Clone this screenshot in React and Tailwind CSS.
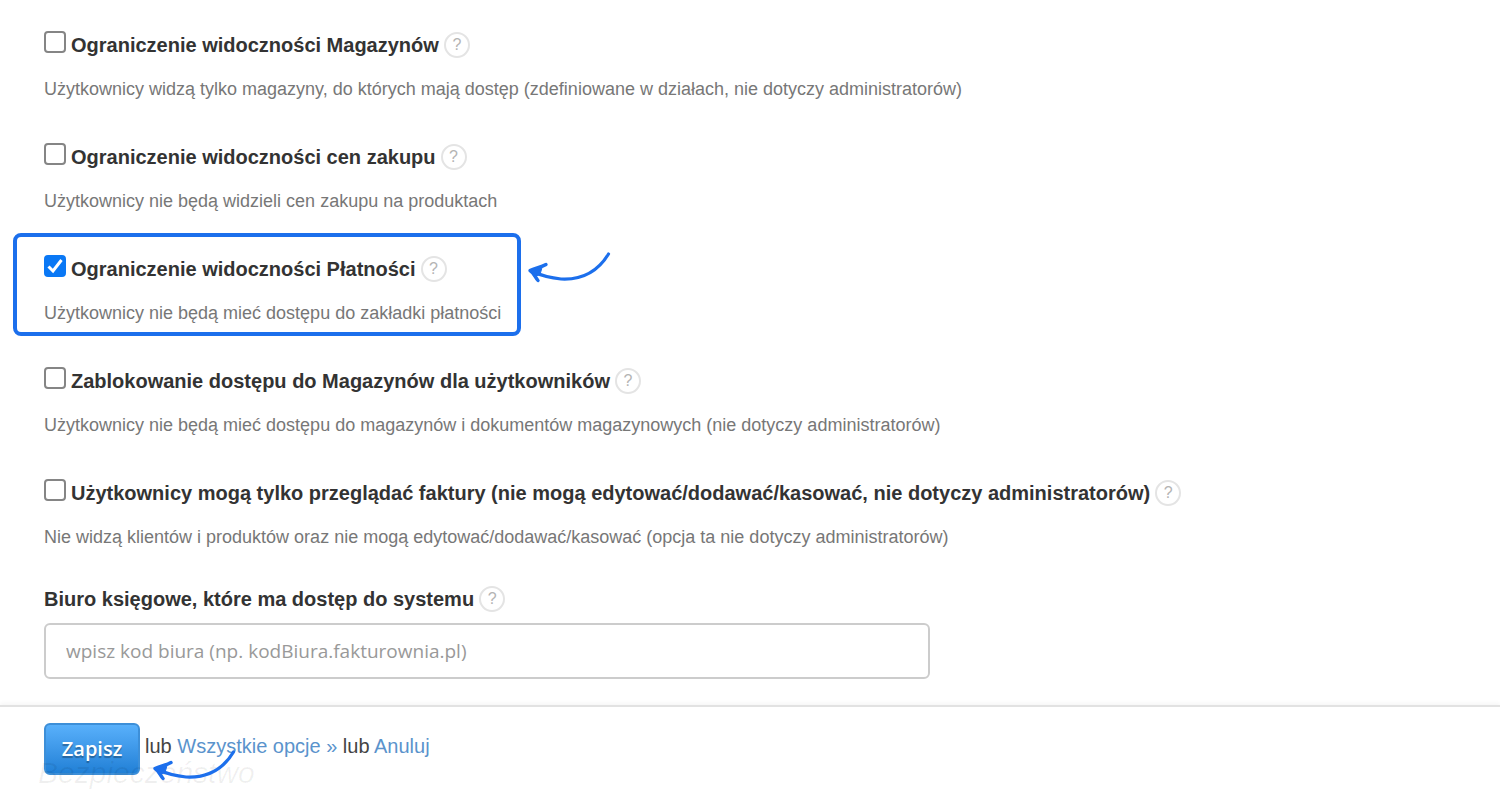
import React, { useState } from 'react';

const OPTIONS = [
  {
    id: 'warehouses',
    label: 'Ograniczenie widoczności Magazynów',
    description: 'Użytkownicy widzą tylko magazyny, do których mają dostęp (zdefiniowane w działach, nie dotyczy administratorów)',
  },
  {
    id: 'purchase-prices',
    label: 'Ograniczenie widoczności cen zakupu',
    description: 'Użytkownicy nie będą widzieli cen zakupu na produktach',
  },
  {
    id: 'payments',
    label: 'Ograniczenie widoczności Płatności',
    description: 'Użytkownicy nie będą mieć dostępu do zakładki płatności',
    highlighted: true,
  },
  {
    id: 'block-warehouses',
    label: 'Zablokowanie dostępu do Magazynów dla użytkowników',
    description: 'Użytkownicy nie będą mieć dostępu do magazynów i dokumentów magazynowych (nie dotyczy administratorów)',
  },
  {
    id: 'read-only',
    label: 'Użytkownicy mogą tylko przeglądać faktury (nie mogą edytować/dodawać/kasować, nie dotyczy administratorów)',
    description: 'Nie widzą klientów i produktów oraz nie mogą edytować/dodawać/kasować (opcja ta nie dotyczy administratorów)',
  },
];

function HelpButton() {
  return (
    <button
      type="button"
      aria-label="Pomoc"
      className="ml-[5px] flex h-[26px] w-[26px] shrink-0 items-center justify-center rounded-full border-2 border-[#e4e4e4] bg-white text-base text-[#b4b4b4]"
    >
      ?
    </button>
  );
}

function Arrow({ className }) {
  return (
    <svg viewBox="0 0 84 32" fill="none" stroke="#1c6fec" strokeLinecap="round" strokeLinejoin="round" className={className}>
      <path d="M81.500 3C70 22 53 29 34 28C23 27 13 24 4 20" strokeWidth="3.200" />
      <path d="M19 13.500C14 16.500 8 17 3 19.500C7 22 8 26 11 29.500" strokeWidth="3.400" />
      <path d="M3 20L15 16.500L13 23.500L9 25Z" fill="#1c6fec" strokeWidth="1" />
    </svg>
  );
}

function Option({ option, checked, onChange }) {
  return (
    <div className="relative w-fit">
      <div className="flex h-7 items-center">
        <span className="relative h-[22px] w-[22px] shrink-0 self-start">
          <input
            id={option.id}
            type="checkbox"
            checked={checked}
            onChange={onChange}
            className="block h-[22px] w-[22px] appearance-none rounded-[4px] border-2 border-[#858585] bg-white checked:border-[#0a78f5] checked:bg-[#0a78f5]"
          />
          {checked && (
            <svg viewBox="0 0 22 22" fill="none" stroke="white" strokeWidth="3" className="pointer-events-none absolute inset-0">
              <path d="M4.500 11.500L9 16L17.500 5" />
            </svg>
          )}
        </span>
        <label htmlFor={option.id} className="pl-[5px] text-xl font-bold whitespace-nowrap text-[#333]">
          {option.label}
        </label>
        <HelpButton />
      </div>
      <p className="mt-[18px] text-lg leading-6 whitespace-nowrap text-[#777]">{option.description}</p>

      {option.highlighted && (
        <>
          <div className="pointer-events-none absolute -top-[22px] -right-5 -bottom-[11px] -left-[31px] rounded-lg border-4 border-[#1c6fec]" />
          <Arrow className="pointer-events-none absolute -top-1 left-full ml-[26px] h-8 w-[84px]" />
        </>
      )}
    </div>
  );
}

export default function App() {
  const [checked, setChecked] = useState({ payments: true });
  const [officeCode, setOfficeCode] = useState('');

  const toggle = (id) => setChecked((prev) => ({ ...prev, [id]: !prev[id] }));

  return (
    <form
      onSubmit={(e) => e.preventDefault()}
      className="min-h-screen overflow-hidden bg-white font-['Liberation_Sans',Arial,sans-serif]"
    >
      <div className="px-11 pt-[31px] pb-[26px]">
        <div className="flex flex-col gap-[42px]">
          {OPTIONS.map((option) => (
            <Option
              key={option.id}
              option={option}
              checked={!!checked[option.id]}
              onChange={() => toggle(option.id)}
            />
          ))}
        </div>

        {/* Accounting office */}
        <div className="mt-9 flex h-7 items-center">
          <label htmlFor="office-code" className="text-xl font-bold text-[#333]">
            Biuro księgowe, które ma dostęp do systemu
          </label>
          <HelpButton />
        </div>
        <input
          id="office-code"
          type="text"
          value={officeCode}
          onChange={(e) => setOfficeCode(e.target.value)}
          placeholder="wpisz kod biura (np. kodBiura.fakturownia.pl)"
          className="mt-[10px] block h-14 w-full max-w-[886px] rounded-md border-2 border-[#ccc] bg-white px-5 font-['Open_Sans',sans-serif] text-[19px] text-[#555] placeholder:text-[#999]"
        />
      </div>

      <div className="relative flex items-start border-t-2 border-[#e2e2e2] px-11 pt-4 pb-4 text-xl shadow-[0_-2px_4px_rgba(0,0,0,0.04)]">
        <button
          type="submit"
          className="h-[52px] w-24 rounded-md border-2 border-[#3d8fd8] bg-linear-to-b from-[#58b0fb] to-[#2080d6] font-['Open_Sans',sans-serif] text-xl font-semibold text-white text-shadow-[0_2px_1px_rgba(0,0,0,0.3)]"
        >
          Zapisz
        </button>
        <p className="ml-[5px] leading-[46px] text-[#444]">
          lub <a href="#all" className="text-[#5a93cc]">Wszystkie opcje »</a> lub{' '}
          <a href="#cancel" className="text-[#5a93cc]">Anuluj</a>
        </p>
        <span className="pointer-events-none absolute bottom-0 left-[38px] text-[30px] leading-9 font-normal text-black/6 italic">
          Bezpieczeństwo
        </span>
        <Arrow className="pointer-events-none absolute bottom-[10px] left-[152px] h-8 w-[84px]" />
      </div>
    </form>
  );
}
